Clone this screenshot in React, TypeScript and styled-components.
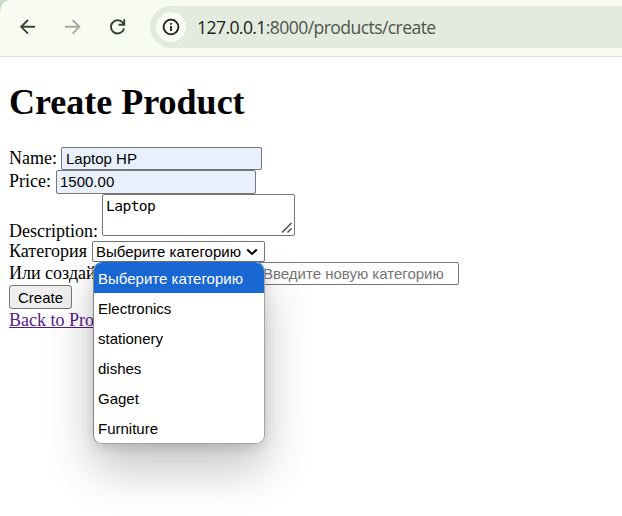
import React from 'react';
import styled, { createGlobalStyle } from 'styled-components';

const GlobalStyle = createGlobalStyle`
  html, body { margin: 0; padding: 0; background: #fff; }
  body { overflow: hidden; }
  * { box-sizing: border-box; }
`;

const Window = styled.div`
  width: 622px;
  height: 516px;
  overflow: hidden;
  background: #fff;
  color: #000;
  font-family: 'Liberation Serif', serif;
  font-size: 18px;
`;

const TopStrip = styled.div`
  background: #c6dcc4;
`;

const Toolbar = styled.header`
  height: 57px;
  display: flex;
  align-items: flex-start;
  padding: 6px 0 0 17px;
  background: #f8fbf1;
  border-bottom: 1px solid #dce1d5;
  border-top-left-radius: 10px 12px;
`;

const NavButton = styled.button<{ $muted?: boolean }>`
  width: 22px;
  height: 22px;
  margin: 10px 23px 0 0;
  padding: 0;
  border: 0;
  background: none;
  color: ${(p) => (p.$muted ? '#a5aba0' : '#37472f')};
  svg { display: block; }
`;

const AddressBar = styled.div`
  flex: 1;
  height: 42px;
  margin-left: -2px;
  padding-left: 6px;
  display: flex;
  align-items: center;
  background: #e3ebdf;
  border-radius: 21px 0 0 21px;
`;

const SiteInfo = styled.span`
  width: 30px;
  height: 30px;
  border-radius: 50%;
  background: #f8fbf1;
  display: grid;
  place-items: center;
`;

const Url = styled.span`
  margin: 0 0 0 11px;
  font: 17.6px/24px 'Open Sans', sans-serif;
  letter-spacing: -0.6px;
  color: #50554c;
  white-space: nowrap;
  b { font-weight: 400; color: #1b1e19; }
`;

const Page = styled.main`
  padding: 25px 9px 0;
`;

const Title = styled.h1`
  margin: 0 0 24px;
  font-size: 36px;
  line-height: 41px;
  font-weight: 700;
`;

const Row = styled.div<{ $height: number }>`
  height: ${(p) => p.$height}px;
  display: flex;
  align-items: flex-start;
  white-space: nowrap;
`;

const Label = styled.label<{ $top: number; $width: number }>`
  width: ${(p) => p.$width}px;
  flex: none;
  margin-top: ${(p) => p.$top}px;
  line-height: 20px;
`;

const TextInput = styled.input<{ $width: number; $filled?: boolean; $height?: number; $inset?: number }>`
  width: ${(p) => p.$width}px;
  height: ${(p) => p.$height ?? 24}px;
  margin: 0;
  padding: 0 4px 1px ${(p) => p.$inset ?? 4}px;
  border: 1px solid #767676;
  border-radius: 2px;
  background: ${(p) => (p.$filled ? '#e8f0fe' : '#fff')};
  color: #000;
  font: 15px 'Liberation Sans', sans-serif;
  outline: none;
  &::placeholder { color: #757575; opacity: 1; }
`;

const DescriptionBox = styled.div`
  position: relative;
  width: 193px;
  height: 42px;
  padding: 2px 4px 2px 3px;
  border: 1px solid #767676;
  border-radius: 2px;
  font: 14.6px/18px 'DejaVu Sans Mono', monospace;
  letter-spacing: -0.57px;
`;

const Grip = styled.svg`
  position: absolute;
  right: 1px;
  bottom: 1px;
`;

const SelectWrap = styled.div`
  position: relative;
`;

const SelectBox = styled.div`
  width: 173px;
  height: 21px;
  padding: 0 6px 0 3px;
  display: flex;
  align-items: center;
  justify-content: space-between;
  border: 1px solid #767676;
  border-radius: 2px;
  font: 15px/19px 'Liberation Sans', sans-serif;
`;

const Menu = styled.ul`
  position: absolute;
  z-index: 2;
  top: 21px;
  left: 1px;
  width: 172px;
  height: 182px;
  margin: 0;
  padding: 0;
  list-style: none;
  overflow: hidden;
  background: #fff;
  border: 1px solid #a2a2a2;
  border-top-color: #1967d2;
  border-left-color: #868686;
  border-radius: 9px;
  box-shadow: 0 24px 48px rgba(0, 0, 0, 0.24), 0 4px 12px rgba(0, 0, 0, 0.12);
`;

const Option = styled.li<{ $active?: boolean }>`
  height: 30px;
  padding: 1px 0 0 4px;
  font: 15px/30px 'Liberation Sans', sans-serif;
  background: ${(p) => (p.$active ? '#1967d2' : '#fff')};
  color: ${(p) => (p.$active ? '#fff' : '#000')};
`;

const SubmitButton = styled.button`
  width: 63px;
  height: 24px;
  padding: 1px 0 0;
  border: 1px solid #767676;
  border-radius: 3px;
  background: #efefef;
  color: #000;
  font: 15px 'Liberation Sans', sans-serif;
`;

const BackLink = styled.a`
  margin-top: 1px;
  line-height: 20px;
  color: #551a8b;
  text-decoration: underline;
`;

const options = ['Выберите категорию', 'Electronics', 'stationery', 'dishes', 'Gaget', 'Furniture'];

const BackArrow = () => (
  <svg width="22" height="22" viewBox="0 0 22 22" fill="none" stroke="currentColor" strokeWidth="1.9">
    <path d="M18 10.8H4.8M11 4l-6.8 6.8L11 17.6" />
  </svg>
);

const ForwardArrow = () => (
  <svg width="22" height="22" viewBox="0 0 22 22" fill="none" stroke="currentColor" strokeWidth="1.9">
    <path d="M3 10.8h13.2M10.6 4l6.8 6.8-6.8 6.8" />
  </svg>
);

const Reload = () => (
  <svg width="22" height="22" viewBox="0 0 22 22" fill="none" stroke="currentColor" strokeWidth="1.9">
    <path d="M16.6 8.2A6.6 6.6 0 1 0 17 12.4M17.2 3.2v5.6h-5.6" />
  </svg>
);

const InfoIcon = () => (
  <svg width="18" height="18" viewBox="0 0 18 18" fill="none" stroke="#1d211b">
    <circle cx="9" cy="9" r="7.4" strokeWidth="1.8" />
    <path d="M9 8v5M9 5v1.8" strokeWidth="1.8" />
  </svg>
);

export default function App() {
  return (
    <Window>
      <GlobalStyle />
      <TopStrip>
        <Toolbar>
          <NavButton aria-label="Back"><BackArrow /></NavButton>
          <NavButton aria-label="Forward" $muted><ForwardArrow /></NavButton>
          <NavButton aria-label="Reload"><Reload /></NavButton>
          <AddressBar>
            <SiteInfo><InfoIcon /></SiteInfo>
            <Url><b>127.0.0.1</b>:8000/products/create</Url>
          </AddressBar>
        </Toolbar>
      </TopStrip>
      <Page>
        <Title>Create Product</Title>
        <Row $height={23}>
          <Label $top={1} $width={52}>Name:</Label>
          <TextInput $width={201} $height={23} $filled defaultValue="Laptop HP" />
        </Row>
        <Row $height={24}>
          <Label $top={1} $width={47}>Price:</Label>
          <TextInput $width={200} $inset={3} $filled defaultValue="1500.00" />
        </Row>
        <Row $height={47}>
          <Label $top={27} $width={93}>Description:</Label>
          <DescriptionBox>
            Laptop
            <Grip width="12" height="12" viewBox="0 0 12 12" stroke="#444" strokeWidth="1.4">
              <path d="M1 10.5L10.5 1M6.5 10.5l4-4" />
            </Grip>
          </DescriptionBox>
        </Row>
        <Row $height={21}>
          <Label $top={0} $width={83}>Категория</Label>
          <SelectWrap>
            <SelectBox>
              Выберите категорию
              <svg width="12" height="8" viewBox="0 0 12 8" fill="none" stroke="#000" strokeWidth="2.1">
                <path d="M1.2 1.5L6 5.9l4.8-4.4" />
              </svg>
            </SelectBox>
            <Menu>
              {options.map((name, i) => (
                <Option key={name} $active={i === 0}>{name}</Option>
              ))}
            </Menu>
          </SelectWrap>
        </Row>
        <Row $height={23}>
          <Label $top={1} $width={249}>Или создайте новую категорию:</Label>
          <TextInput $width={201} $height={23} placeholder="Введите новую категорию" />
        </Row>
        <Row $height={24}>
          <SubmitButton>Create</SubmitButton>
        </Row>
        <Row $height={20}>
          <BackLink href="#">Back to Products</BackLink>
        </Row>
      </Page>
    </Window>
  );
}
